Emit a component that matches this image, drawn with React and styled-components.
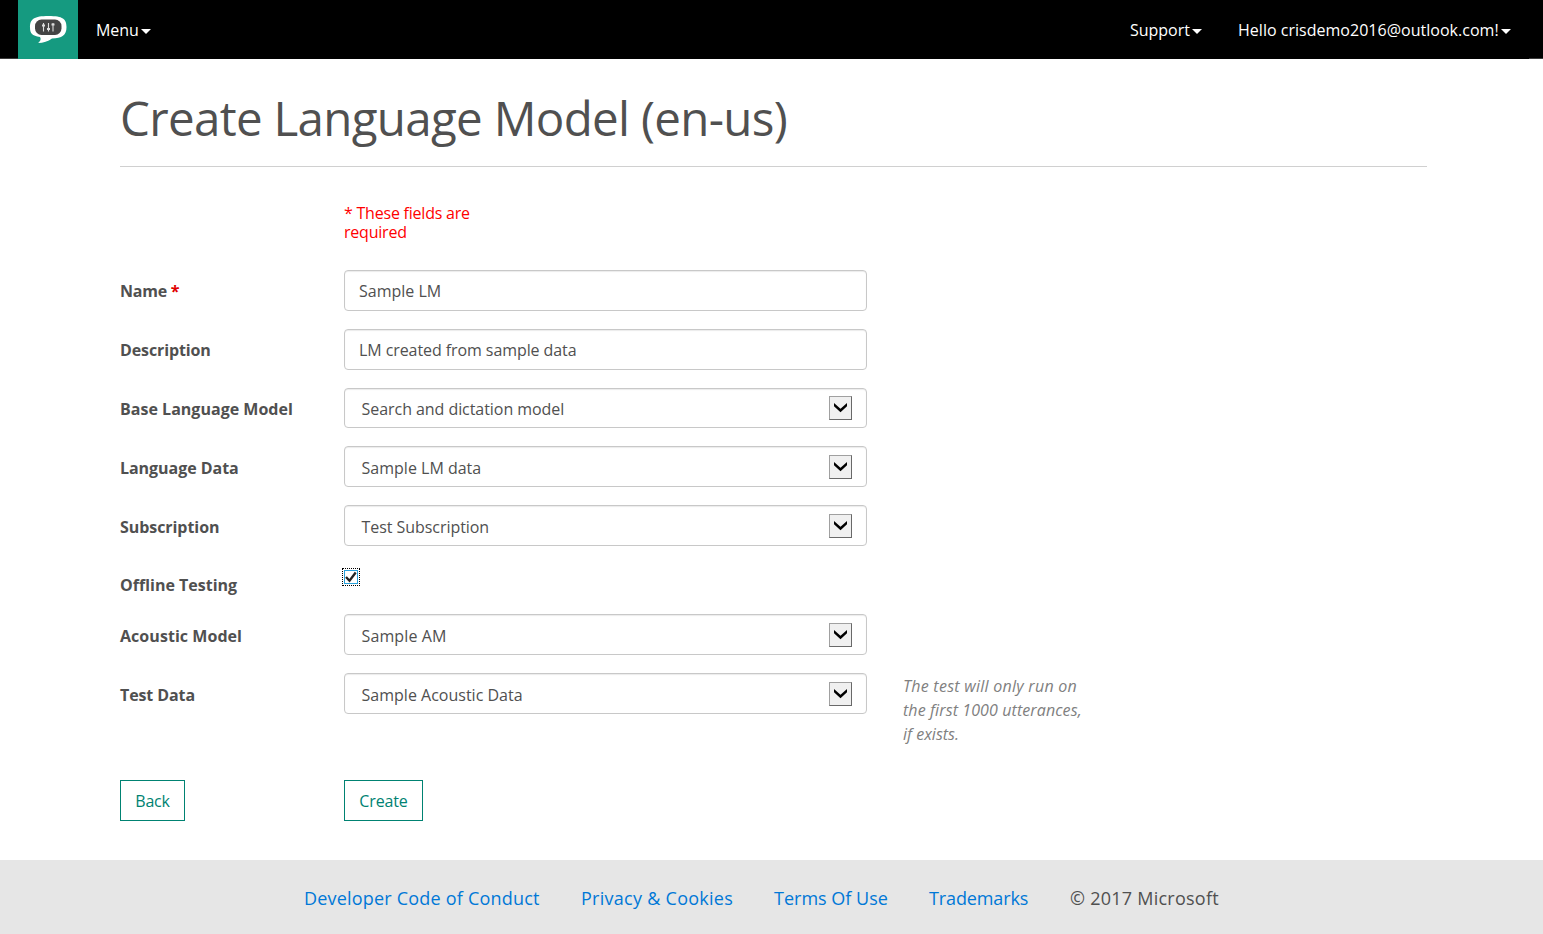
import React from 'react';
import styled, { createGlobalStyle } from 'styled-components';

const GlobalStyle = createGlobalStyle`
  *, *::before, *::after { box-sizing: border-box; }
  body {
    margin: 0;
    background: #fff;
    color: #505050;
    font-family: "Open Sans", "Noto Sans", sans-serif;
    font-size: 16px;
    line-height: 24px;
  }
`;

const Page = styled.div`
  display: flex;
  flex-direction: column;
  height: 934px;
`;

const Header = styled.header`
  height: 59px;
  padding: 0 14px 0 18px;
  background: #000;
  border-bottom: 1px solid #3c3c3c;
`;

const Nav = styled.nav`
  display: flex;
  align-items: center;
  height: 59px;
  background: #000;
`;

const Brand = styled.a`
  display: block;
  width: 60px;
  height: 59px;
  margin-right: 18px;
  background: #159a80;
`;

const NavItem = styled.a`
  display: flex;
  align-items: center;
  width: ${(p) => p.$width}px;
  margin-left: ${(p) => p.$push || '0'};
  margin-right: ${(p) => p.$gap || 0}px;
  padding-top: 1px;
  justify-content: space-between;
  color: #fff;
  white-space: nowrap;
  letter-spacing: ${(p) => p.$track || 0}px;
`;

const Caret = styled.span`
  margin-top: 2px;
  border: 5px solid transparent;
  border-top-color: #fff;
  border-bottom: 0;
`;

const Main = styled.main`
  flex: 1;
  padding: 0 116px 0 120px;
`;

const Title = styled.h1`
  height: 108px;
  margin: 0;
  padding-top: 27px;
  border-bottom: 1px solid #d0d0d0;
  font-size: 47.5px;
  font-weight: 400;
  line-height: 64px;
  letter-spacing: ${(p) => p.$track}px;
  white-space: nowrap;
`;

const Required = styled.p`
  width: 150px;
  height: 66px;
  margin: 37px 0 0 224px;
  color: #f00;
  line-height: 19px;
  letter-spacing: ${(p) => p.$track}px;
`;

const Form = styled.form`
  display: flex;
  flex-direction: column;
  gap: 18px;
`;

const Row = styled.div`
  display: grid;
  grid-template-columns: 224px 523px 200px;
  grid-template-rows: 100%;
  height: ${(p) => p.$height || 40.8}px;
`;

const Label = styled.label`
  padding-top: 9.4px;
  font-weight: 700;
  letter-spacing: ${(p) => p.$track}px;
  white-space: nowrap;
`;

const Star = styled.span`
  color: #e00000;
`;

const Field = styled.div`
  display: flex;
  justify-content: space-between;
  align-items: flex-start;
  padding: 8.4px 14px 0 ${(p) => (p.$select ? 16.6 : 14)}px;
  border: 1px solid #c8c8c8;
  border-radius: 4px;
  box-shadow: inset 0 1px 1px rgba(0, 0, 0, 0.08);
  letter-spacing: ${(p) => p.$track}px;
  white-space: nowrap;
`;

const DropButton = styled.span`
  display: block;
  width: 23px;
  height: 24px;
  margin-top: -1px;
  background: #f0f0f0;
  border: 1px solid;
  border-color: #a0a0a0 #696969 #696969 #a0a0a0;

  svg { display: block; }
`;

const Hint = styled.p`
  margin: 1px 0 0 36px;
  color: #808080;
  font-style: italic;
  white-space: nowrap;
`;

const HintLine = styled.span`
  display: block;
  letter-spacing: ${(p) => p.$track}px;
`;

const CheckBox = styled.span`
  display: block;
  width: 18px;
  height: 18px;
  margin: 4px 0 0 -2px;
  border: 1px dotted #000;

  svg { display: block; }
`;

const Actions = styled.div`
  display: grid;
  grid-template-columns: 224px 523px;
  justify-items: start;
  margin-top: 48px;
`;

const Button = styled.button`
  width: ${(p) => p.$width}px;
  height: 41px;
  padding: 1px 0 0;
  background: #fff;
  border: 1px solid #008272;
  color: #008272;
  font: inherit;
  letter-spacing: ${(p) => p.$track}px;
`;

const Footer = styled.footer`
  display: flex;
  height: 74px;
  padding: 26px 0 0 304px;
  background: #e6e6e6;
  font-size: 18px;
`;

const FooterItem = styled.span`
  width: ${(p) => p.$width}px;
  color: ${(p) => (p.$plain ? '#505050' : '#0078d7')};
  letter-spacing: ${(p) => p.$track}px;
  white-space: nowrap;
`;

const Logo = () => (
  <svg width="60" height="59" viewBox="0 0 60 59">
    <path d="M22 37C14 36 12 33 12 27.500C12 19 16 16 30.500 16C45 16 48.500 19 48.500 27C48.500 35.500 44 38 34 38.500C30 41.500 25.500 42.800 20 43C22 41.500 23.500 39.500 22 37Z" fill="#fff" />
    <rect x="17" y="19.500" width="26.500" height="15.500" rx="6.500" fill="#444" />
    <path d="M25.500 23v8.500M30.500 23v8.500M35 23v8.500" stroke="#ddd" strokeWidth="1.100" />
    <path d="M24 25.500h3M29 29h3M33.500 24.500h3" stroke="#ddd" strokeWidth="1.800" />
  </svg>
);

const Arrow = () => (
  <DropButton>
    <svg width="21" height="22" viewBox="0 0 21 22">
      <path d="M4 6L10.500 11.800L17 6V9.300L10.500 15.300L4 9.300Z" fill="#000" />
    </svg>
  </DropButton>
);

const Check = () => (
  <CheckBox>
    <svg width="16" height="16" viewBox="0 0 16 16">
      <rect x="1.500" y="1.500" width="13" height="13" fill="#fff" stroke="#26a0da" />
      <path d="M3 8L6.500 11.800L12.700 3.500" fill="none" stroke="#222" strokeWidth="2.300" />
    </svg>
  </CheckBox>
);

const modelRows = [
  { label: 'Name ', required: true, value: 'Sample LM', lt: -0.25, vt: 0 },
  { label: 'Description', value: 'LM created from sample data', lt: -0.12, vt: -0.08 },
  { label: 'Base Language Model', value: 'Search and dictation model', select: true, lt: 0.02, vt: -0.06 },
  { label: 'Language Data', value: 'Sample LM data', select: true, lt: -0.04, vt: 0 },
  { label: 'Subscription', value: 'Test Subscription', select: true, lt: -0.06, vt: -0.06 },
];

const testRows = [
  { label: 'Acoustic Model', value: 'Sample AM', select: true, lt: 0.05, vt: 0.1 },
  {
    label: 'Test Data', value: 'Sample Acoustic Data', select: true, lt: -0.1, vt: 0,
    hint: [['The test will only run on', 0.26], ['the first 1000 utterances,', 0.1], ['if exists.', 0]],
  },
];

const FormRow = ({ row }) => (
  <Row>
    <Label $track={row.lt}>{row.label}{row.required && <Star>*</Star>}</Label>
    <Field $select={row.select} $track={row.vt}>
      <span>{row.value}</span>
      {row.select && <Arrow />}
    </Field>
    {row.hint && (
      <Hint>{row.hint.map(([text, track]) => <HintLine key={text} $track={track}>{text}</HintLine>)}</Hint>
    )}
  </Row>
);

export default function App() {
  return (
    <Page>
      <GlobalStyle />
      <Header>
        <Nav>
          <Brand><Logo /></Brand>
          <NavItem $width={55} $track={-0.05}>Menu<Caret /></NavItem>
          <NavItem $width={72} $push="auto" $gap={36} $track={-0.02}>Support<Caret /></NavItem>
          <NavItem $width={273} $gap={18} $track={0.02}>Hello crisdemo2016@outlook.com!<Caret /></NavItem>
        </Nav>
      </Header>
      <Main>
        <Title $track={-0.69}>Create Language Model (en-us)</Title>
        <Required $track={-0.22}>* These fields are required</Required>
        <Form>
          {modelRows.map((row) => <FormRow key={row.label} row={row} />)}
          <Row $height={32.4}>
            <Label $track={0}>Offline Testing</Label>
            <Check />
          </Row>
          {testRows.map((row) => <FormRow key={row.label} row={row} />)}
          <Actions>
            <Button type="button" $width={65} $track={-0.2}>Back</Button>
            <Button type="button" $width={79} $track={-0.15}>Create</Button>
          </Actions>
        </Form>
      </Main>
      <Footer>
        <FooterItem $width={277} $track={0.2}>Developer Code of Conduct</FooterItem>
        <FooterItem $width={193} $track={0.27}>Privacy &amp; Cookies</FooterItem>
        <FooterItem $width={155} $track={0}>Terms Of Use</FooterItem>
        <FooterItem $width={141} $track={-0.12}>Trademarks</FooterItem>
        <FooterItem $width={160} $plain $track={0.25}>© 2017 Microsoft</FooterItem>
      </Footer>
    </Page>
  );
}
